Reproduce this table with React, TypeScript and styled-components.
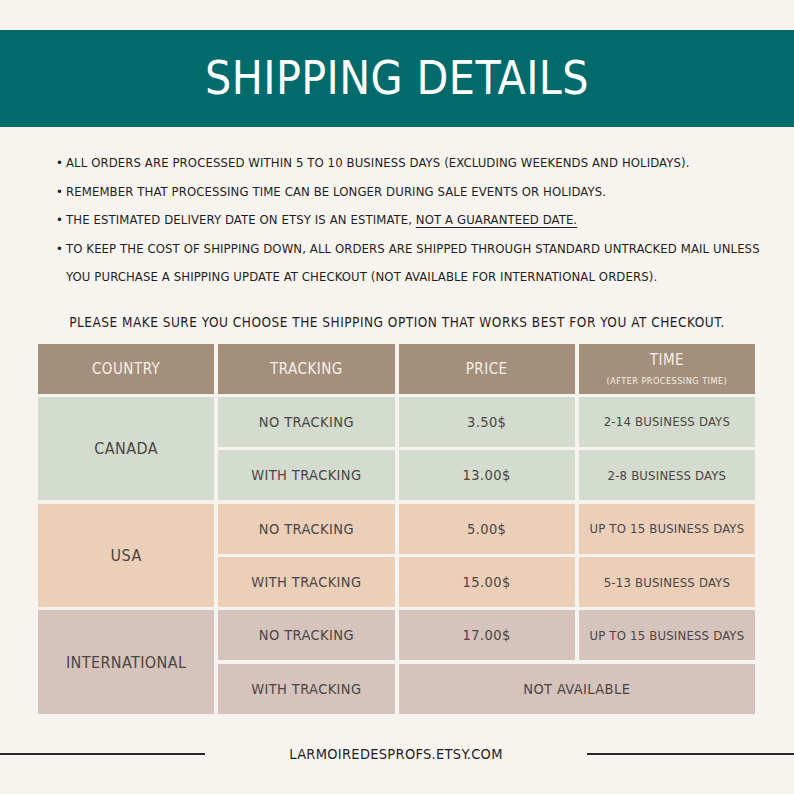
import styled, { createGlobalStyle } from "styled-components";

const GlobalStyle = createGlobalStyle`
  body {
    margin: 0;
    background: #f7f4ef;
    font-family: "DejaVu Sans Condensed", "Liberation Sans", sans-serif;
  }
`;

type Option = { tracking: string; price: string; time: string };
type Country = { name: string; tone: string; options: Option[]; merged?: string };

const countries: Country[] = [
  {
    name: "CANADA",
    tone: "#d3dccf",
    options: [
      { tracking: "NO TRACKING", price: "3.50$", time: "2-14 BUSINESS DAYS" },
      { tracking: "WITH TRACKING", price: "13.00$", time: "2-8 BUSINESS DAYS" },
    ],
  },
  {
    name: "USA",
    tone: "#ebcfb9",
    options: [
      { tracking: "NO TRACKING", price: "5.00$", time: "UP TO 15 BUSINESS DAYS" },
      { tracking: "WITH TRACKING", price: "15.00$", time: "5-13 BUSINESS DAYS" },
    ],
  },
  {
    name: "INTERNATIONAL",
    tone: "#d5c3bc",
    options: [
      { tracking: "NO TRACKING", price: "17.00$", time: "UP TO 15 BUSINESS DAYS" },
      { tracking: "WITH TRACKING", price: "", time: "" },
    ],
    merged: "NOT AVAILABLE",
  },
];

export default function App() {
  return (
    <Page>
      <GlobalStyle />
      <Banner>
        <Title>SHIPPING DETAILS</Title>
      </Banner>

      <Notes>
        <Note>ALL ORDERS ARE PROCESSED WITHIN 5 TO 10 BUSINESS DAYS (EXCLUDING WEEKENDS AND HOLIDAYS).</Note>
        <Note>REMEMBER THAT PROCESSING TIME CAN BE LONGER DURING SALE EVENTS OR HOLIDAYS.</Note>
        <Note>
          THE ESTIMATED DELIVERY DATE ON ETSY IS AN ESTIMATE, <u>NOT A GUARANTEED DATE.</u>
        </Note>
        <Note>
          <Line>TO KEEP THE COST OF SHIPPING DOWN, ALL ORDERS ARE SHIPPED THROUGH STANDARD UNTRACKED MAIL UNLESS</Line>
          <Line>YOU PURCHASE A SHIPPING UPDATE AT CHECKOUT (NOT AVAILABLE FOR INTERNATIONAL ORDERS).</Line>
        </Note>
      </Notes>

      <Advice>PLEASE MAKE SURE YOU CHOOSE THE SHIPPING OPTION THAT WORKS BEST FOR YOU AT CHECKOUT.</Advice>

      <Table>
        <HeadCell>COUNTRY</HeadCell>
        <HeadCell>TRACKING</HeadCell>
        <HeadCell>PRICE</HeadCell>
        <HeadCell>
          TIME
          <HeadNote>(AFTER PROCESSING TIME)</HeadNote>
        </HeadCell>

        {countries.map((c) => [
          <Cell key={c.name} $tone={c.tone} $rows={2} $size={16}>
            {c.name}
          </Cell>,
          ...c.options.flatMap((o, i) =>
            c.merged && i === 1
              ? [
                  <Cell key={c.name + i + "t"} $tone={c.tone}>{o.tracking}</Cell>,
                  <Cell key={c.name + i + "m"} $tone={c.tone} $cols={2}>{c.merged}</Cell>,
                ]
              : [
                  <Cell key={c.name + i + "t"} $tone={c.tone}>{o.tracking}</Cell>,
                  <Cell key={c.name + i + "p"} $tone={c.tone}>{o.price}</Cell>,
                  <Cell key={c.name + i + "d"} $tone={c.tone} $size={13}>{o.time}</Cell>,
                ]
          ),
        ])}
      </Table>

      <Footer>
        <Rule />
        <Site>LARMOIREDESPROFS.ETSY.COM</Site>
        <Rule />
      </Footer>
    </Page>
  );
}

const Page = styled.div`
  width: 794px;
  height: 794px;
  display: flex;
  flex-direction: column;
  padding-top: 30px;
  box-sizing: border-box;
  color: #1f1d1c;

  & > * {
    flex-shrink: 0;
  }
`;

const Banner = styled.header`
  height: 97px;
  background: #006b6a;
  display: flex;
  align-items: center;
  justify-content: center;
`;

const Title = styled.h1`
  margin: 0 0 2px;
  color: #ffffff;
  font-weight: 400;
  font-size: 46px;
  letter-spacing: 0.4px;
`;

const Notes = styled.ul`
  margin: 22px 0 0;
  padding: 0 0 0 66px;
  list-style: none;
`;

const Note = styled.li`
  position: relative;
  font-size: 13px;
  line-height: 28.5px;
  letter-spacing: 0.1px;

  &::before {
    content: "•";
    position: absolute;
    left: -10px;
  }

  u {
    text-underline-offset: 3px;
  }
`;

const Line = styled.span`
  display: block;
  white-space: nowrap;
`;

const Advice = styled.p`
  margin: 20px 0 0;
  text-align: center;
  font-size: 13.5px;
  line-height: 20px;
  letter-spacing: 0.5px;
`;

const Table = styled.div`
  margin: 12px 0 0 38px;
  width: 717px;
  display: grid;
  grid-template-columns: repeat(4, 1fr);
  grid-template-rows: 50px repeat(6, 50px);
  column-gap: 4px;
  row-gap: 3.4px;
`;

const HeadCell = styled.div`
  background: #a38f7b;
  color: #f6f0e9;
  display: flex;
  flex-direction: column;
  align-items: center;
  justify-content: center;
  font-size: 15px;
  letter-spacing: 0.5px;
`;

const HeadNote = styled.span`
  font-size: 9px;
  letter-spacing: 0.5px;
  margin-top: 7px;
`;

const Cell = styled.div<{ $tone: string; $rows?: number; $cols?: number; $size?: number }>`
  background: ${(p) => p.$tone};
  color: #4a4544;
  grid-row: span ${(p) => p.$rows ?? 1};
  grid-column: span ${(p) => p.$cols ?? 1};
  display: flex;
  align-items: center;
  justify-content: center;
  font-size: ${(p) => p.$size ?? 14.5}px;
  letter-spacing: ${(p) => (p.$size === 13 ? "0.2px" : "0.4px")};
`;

const Footer = styled.footer`
  margin-top: 30px;
  height: 20px;
  display: grid;
  grid-template-columns: 205px 1fr 207px;
  align-items: center;
`;

const Rule = styled.div`
  height: 1.5px;
  background: #2a2827;
`;

const Site = styled.span`
  text-align: center;
  font-size: 14.5px;
  letter-spacing: 0.3px;
  color: #1f1d1c;
`;
